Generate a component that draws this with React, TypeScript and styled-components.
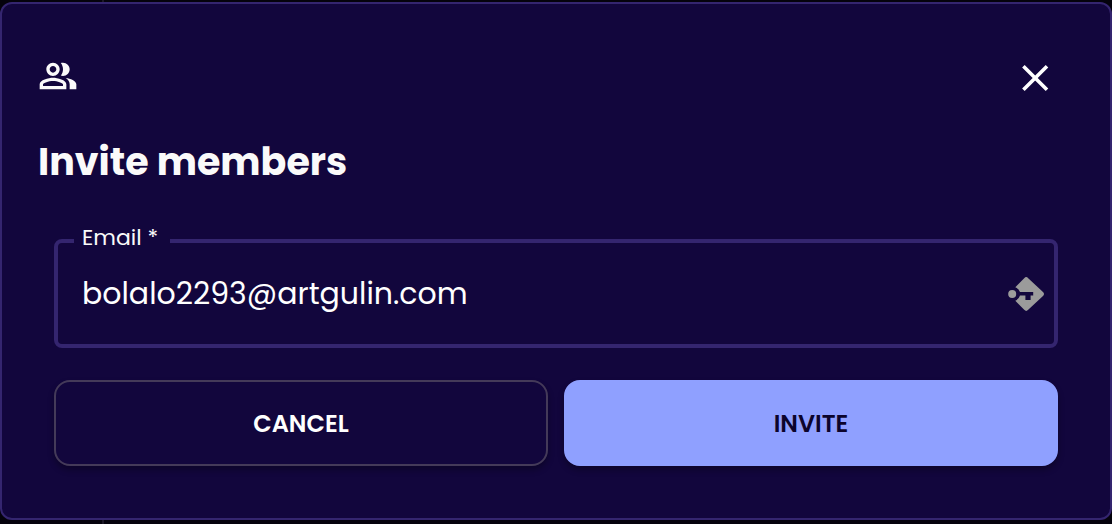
import React, { useState } from "react";
import styled, { createGlobalStyle, css } from "styled-components";

const GlobalStyle = createGlobalStyle`
  *, *::before, *::after { box-sizing: border-box; }
  body {
    margin: 0;
    background: linear-gradient(90deg, transparent 102px, #1b1726 102px, #1b1726 104px, transparent 104px) #04020c;
    color: #fafafa;
    font-family: Poppins, Inter, "Liberation Sans", sans-serif;
  }
`;

const Dialog = styled.main`
  margin: 2px 0 4px;
  padding: 52px 52px 52px 36px;
  border: 2px solid #34256f;
  border-radius: 12px;
  background: #12063d;
`;

const Header = styled.header`
  display: flex;
  align-items: flex-start;
  justify-content: space-between;
`;

const IconButton = styled.button`
  display: flex;
  padding: 0;
  border: 0;
  background: none;
  color: #fff;
  cursor: pointer;
`;

const Title = styled.h1`
  margin: 36px 0 42px;
  font-size: 38px;
  line-height: 48px;
  font-weight: 700;
`;

const Form = styled.form`
  display: flex;
  flex-direction: column;
  gap: 32px;
  padding-left: 16px;
`;

const Field = styled.fieldset`
  display: flex;
  align-items: center;
  min-width: 0;
  margin: 0;
  padding: 0 9px 0 16px;
  border: 4px solid #34256f;
  border-radius: 8px;
`;

const Legend = styled.legend`
  padding: 0 12px 6px 8px;
  font-size: 22px;
  line-height: 20px;
`;

const Label = styled.label`
  display: block;
`;

const Input = styled.input`
  flex: 1;
  min-width: 0;
  height: 80px;
  margin-bottom: 10px;
  padding: 0 8px;
  border: 0;
  outline: 0;
  background: none;
  color: #fff;
  font-family: inherit;
  font-size: 30px;
`;

const KeyButton = styled(IconButton)`
  margin-bottom: 10px;
  color: #9b9b9b;
`;

const Actions = styled.div`
  display: grid;
  grid-template-columns: 1fr 1fr;
  gap: 16px;
`;

const Button = styled.button<{ $primary?: boolean }>`
  height: 86px;
  border: 2px solid #443a59;
  border-radius: 16px;
  background: #12063d;
  color: #fff;
  font-family: inherit;
  font-size: 24px;
  font-weight: 600;
  text-transform: uppercase;
  box-shadow: 0 4px 6px rgba(0, 0, 0, 0.3);
  cursor: pointer;
  ${(p) =>
    p.$primary &&
    css`
      border-color: #8fa0ff;
      background: #8fa0ff;
      color: #0c042c;
    `}
`;

const PeopleIcon = () => (
  <svg width="40" height="40" viewBox="0 0 24 24" fill="currentColor" aria-hidden="true">
    <path d="M16.67 13.13C18.04 14.06 19 15.32 19 17v3h4v-3c0-2.18-3.57-3.47-6.33-3.87z" />
    <path d="M15 12c2.21 0 4-1.79 4-4s-1.79-4-4-4c-.47 0-.91.1-1.33.24C14.5 5.27 15 6.58 15 8s-.5 2.73-1.33 3.76c.42.14.86.24 1.33.24z" />
    <path d="M9 12c2.21 0 4-1.79 4-4s-1.79-4-4-4-4 1.79-4 4 1.79 4 4 4zm0-6c1.1 0 2 .9 2 2s-.9 2-2 2-2-.9-2-2 .9-2 2-2z" />
    <path d="M9 13c-2.67 0-8 1.34-8 4v3h16v-3c0-2.66-5.33-4-8-4zm6 5H3v-.99C3.2 16.29 6.3 15 9 15s5.8 1.29 6 2v1z" />
  </svg>
);

const CloseIcon = () => (
  <svg width="46" height="46" viewBox="0 0 46 46" stroke="currentColor" strokeWidth="3.6" aria-hidden="true">
    <path d="M11.4 10.2 35 33.8M35 10.2 11.4 33.8" />
  </svg>
);

const KeyIcon = () => (
  <svg width="38" height="38" viewBox="0 0 38 38" fill="currentColor" aria-hidden="true">
    <circle cx="5.2" cy="19" r="4" />
    <path d="M8.3 12.2 17.2 3.2Q19.2 1 21.2 3.2L36 17Q38 19 36 21L21.2 34.8Q19.2 37 17.2 34.8L8.3 25.8Q12 24.3 13 20.6H18.4V25H23.6V20.6H26.2V17H13Q12 13.7 8.3 12.2Z" />
  </svg>
);

export default function App() {
  const [email, setEmail] = useState("bolalo2293@artgulin.com");
  return (
    <>
      <GlobalStyle />
      <Dialog role="dialog" aria-labelledby="dialog-title">
        <Header>
          <PeopleIcon />
          <IconButton type="button" aria-label="Close">
            <CloseIcon />
          </IconButton>
        </Header>
        <Title id="dialog-title">Invite members</Title>
        <Form onSubmit={(e) => e.preventDefault()}>
          <Field>
            <Legend>
              <Label htmlFor="email">Email *</Label>
            </Legend>
            <Input id="email" type="email" value={email} onChange={(e) => setEmail(e.target.value)} />
            <KeyButton type="button" aria-label="Fill from password manager">
              <KeyIcon />
            </KeyButton>
          </Field>
          <Actions>
            <Button type="button">Cancel</Button>
            <Button type="submit" $primary>
              Invite
            </Button>
          </Actions>
        </Form>
      </Dialog>
    </>
  );
}
